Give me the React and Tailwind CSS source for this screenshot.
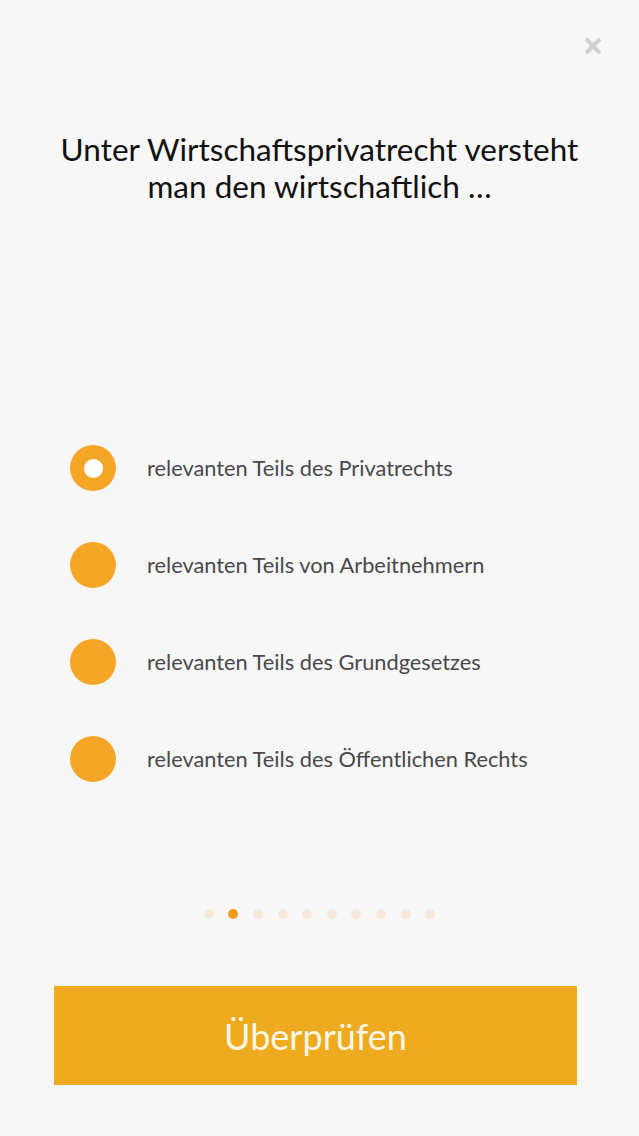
import { useState } from "react";

const OPTIONS = [
  "relevanten Teils des Privatrechts",
  "relevanten Teils von Arbeitnehmern",
  "relevanten Teils des Grundgesetzes",
  "relevanten Teils des Öffentlichen Rechts",
];

export default function App() {
  const [selected, setSelected] = useState(0);

  return (
    <div
      className="relative w-[639px] h-[1136px] bg-[#f7f7f8] flex flex-col items-center"
      style={{ fontFamily: "Lato, 'Open Sans', sans-serif" }}
    >
      {/* close */}
      <button className="absolute top-[36px] right-[36px] w-[20px] h-[20px] flex items-center justify-center">
        <svg width="20" height="20" viewBox="0 0 20 20">
          <path
            d="M3 3 L17 17 M17 3 L3 17"
            stroke="#d0d0d2"
            strokeWidth="4"
            strokeLinecap="butt"
          />
        </svg>
      </button>

      <h1 className="mt-[131px] text-center text-[31.5px] leading-[37px] text-[#111] font-normal">
        Unter Wirtschaftsprivatrecht versteht
        <br />
        man den wirtschaftlich …
      </h1>

      <div className="mt-[240px] w-full flex flex-col gap-[51px] pl-[70px]">
        {OPTIONS.map((opt, i) => (
          <button
            key={i}
            onClick={() => setSelected(i)}
            className="flex items-center h-[46px] text-left"
          >
            <span className="w-[46px] h-[46px] rounded-full bg-[#f5a626] flex items-center justify-center shrink-0">
              {selected === i && (
                <span className="w-[19px] h-[19px] rounded-full bg-white" />
              )}
            </span>
            <span className="ml-[31px] text-[21.8px] text-[#48484a]">{opt}</span>
          </button>
        ))}
      </div>

      <div className="mt-[127px] flex items-center gap-[14.6px]">
        {Array.from({ length: 10 }).map((_, i) => (
          <span
            key={i}
            className={`w-[10px] h-[10px] rounded-full ${
              i === 1 ? "bg-[#f29a1e]" : "bg-[#f6e9da]"
            }`}
          />
        ))}
      </div>

      <button className="mt-[67px] self-start ml-[54px] w-[523px] h-[99px] bg-[#efab1f] text-[#fff8e6] text-[36px] font-normal flex items-center justify-center">
        Überprüfen
      </button>
    </div>
  );
}
